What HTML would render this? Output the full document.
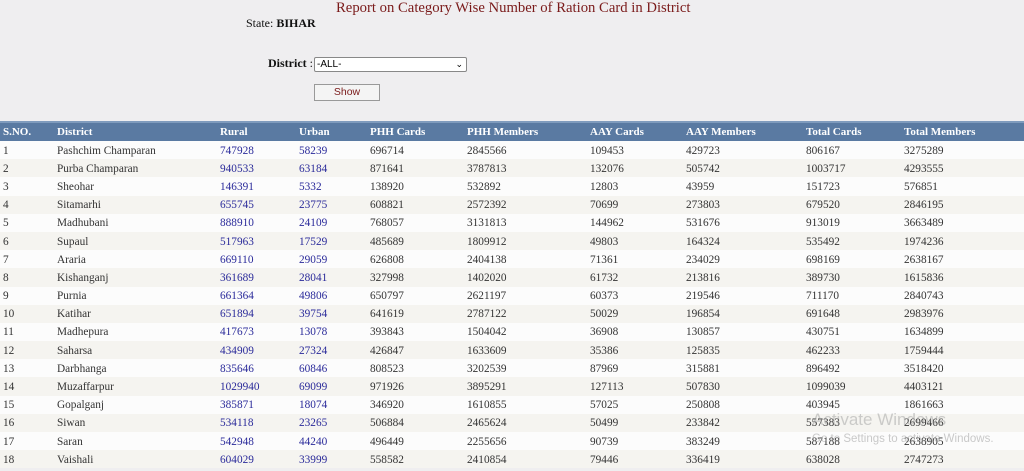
<!DOCTYPE html>
<html><head><meta charset="utf-8"><style>
body{margin:0;width:1024px;height:471px;background:#efeef0;font-family:"Liberation Serif",serif;overflow:hidden;position:relative}
.t{position:absolute;white-space:nowrap}
table{position:absolute;left:0;top:121px;width:1024px;border-collapse:collapse;font-size:11.3px;table-layout:fixed}
th{background:#5a7aa2;color:#fff;text-align:left;height:18px;padding:0 0 0 3px;font-weight:bold;border-top:2px solid #7f9bbd;font-size:11px}
td{height:18.2px;padding:1px 0 0 3px;color:#333;box-sizing:border-box}
tr:nth-child(odd) td{background:#f5f4f0}
tr:nth-child(even) td{background:#fcfcfc}
td.l{color:#2a2a9a}
</style></head><body>
<div class="t" style="left:336px;top:0;font-size:14.7px;color:#7a1a1a">Report on Category Wise Number of Ration Card in District</div>
<div class="t" style="left:246px;top:16px;font-size:12px;color:#111">State: <b>BIHAR</b></div>
<div class="t" style="left:268px;top:56px;font-size:12px;color:#111"><b>District</b> :</div>
<div class="t" style="left:314px;top:57px;width:149px;height:13px;border:1px solid #888;background:#fff;border-radius:2px;font-family:'Liberation Sans',sans-serif;font-size:10px;line-height:13px;padding-left:2px;box-sizing:content-box">-ALL-<span style="position:absolute;right:3px;top:0;font-size:9px">&#8964;</span></div>
<div class="t" style="left:314px;top:84px;width:64px;height:15px;border:1px solid #999;background:#f4f4f4;font-family:'Liberation Sans',sans-serif;font-size:10.5px;line-height:15px;text-align:center;color:#7a1a1a">Show</div>
<table>
<colgroup><col style="width:54px"><col style="width:163px"><col style="width:79px"><col style="width:71px"><col style="width:97px"><col style="width:123px"><col style="width:96px"><col style="width:120px"><col style="width:98px"><col></colgroup>
<tr><th>S.NO.</th><th>District</th><th>Rural</th><th>Urban</th><th>PHH Cards</th><th>PHH Members</th><th>AAY Cards</th><th>AAY Members</th><th>Total Cards</th><th>Total Members</th></tr>
<tr><td>1</td><td>Pashchim Champaran</td><td class="l">747928</td><td class="l">58239</td><td>696714</td><td>2845566</td><td>109453</td><td>429723</td><td>806167</td><td>3275289</td></tr>
<tr><td>2</td><td>Purba Champaran</td><td class="l">940533</td><td class="l">63184</td><td>871641</td><td>3787813</td><td>132076</td><td>505742</td><td>1003717</td><td>4293555</td></tr>
<tr><td>3</td><td>Sheohar</td><td class="l">146391</td><td class="l">5332</td><td>138920</td><td>532892</td><td>12803</td><td>43959</td><td>151723</td><td>576851</td></tr>
<tr><td>4</td><td>Sitamarhi</td><td class="l">655745</td><td class="l">23775</td><td>608821</td><td>2572392</td><td>70699</td><td>273803</td><td>679520</td><td>2846195</td></tr>
<tr><td>5</td><td>Madhubani</td><td class="l">888910</td><td class="l">24109</td><td>768057</td><td>3131813</td><td>144962</td><td>531676</td><td>913019</td><td>3663489</td></tr>
<tr><td>6</td><td>Supaul</td><td class="l">517963</td><td class="l">17529</td><td>485689</td><td>1809912</td><td>49803</td><td>164324</td><td>535492</td><td>1974236</td></tr>
<tr><td>7</td><td>Araria</td><td class="l">669110</td><td class="l">29059</td><td>626808</td><td>2404138</td><td>71361</td><td>234029</td><td>698169</td><td>2638167</td></tr>
<tr><td>8</td><td>Kishanganj</td><td class="l">361689</td><td class="l">28041</td><td>327998</td><td>1402020</td><td>61732</td><td>213816</td><td>389730</td><td>1615836</td></tr>
<tr><td>9</td><td>Purnia</td><td class="l">661364</td><td class="l">49806</td><td>650797</td><td>2621197</td><td>60373</td><td>219546</td><td>711170</td><td>2840743</td></tr>
<tr><td>10</td><td>Katihar</td><td class="l">651894</td><td class="l">39754</td><td>641619</td><td>2787122</td><td>50029</td><td>196854</td><td>691648</td><td>2983976</td></tr>
<tr><td>11</td><td>Madhepura</td><td class="l">417673</td><td class="l">13078</td><td>393843</td><td>1504042</td><td>36908</td><td>130857</td><td>430751</td><td>1634899</td></tr>
<tr><td>12</td><td>Saharsa</td><td class="l">434909</td><td class="l">27324</td><td>426847</td><td>1633609</td><td>35386</td><td>125835</td><td>462233</td><td>1759444</td></tr>
<tr><td>13</td><td>Darbhanga</td><td class="l">835646</td><td class="l">60846</td><td>808523</td><td>3202539</td><td>87969</td><td>315881</td><td>896492</td><td>3518420</td></tr>
<tr><td>14</td><td>Muzaffarpur</td><td class="l">1029940</td><td class="l">69099</td><td>971926</td><td>3895291</td><td>127113</td><td>507830</td><td>1099039</td><td>4403121</td></tr>
<tr><td>15</td><td>Gopalganj</td><td class="l">385871</td><td class="l">18074</td><td>346920</td><td>1610855</td><td>57025</td><td>250808</td><td>403945</td><td>1861663</td></tr>
<tr><td>16</td><td>Siwan</td><td class="l">534118</td><td class="l">23265</td><td>506884</td><td>2465624</td><td>50499</td><td>233842</td><td>557383</td><td>2699466</td></tr>
<tr><td>17</td><td>Saran</td><td class="l">542948</td><td class="l">44240</td><td>496449</td><td>2255656</td><td>90739</td><td>383249</td><td>587188</td><td>2638905</td></tr>
<tr><td>18</td><td>Vaishali</td><td class="l">604029</td><td class="l">33999</td><td>558582</td><td>2410854</td><td>79446</td><td>336419</td><td>638028</td><td>2747273</td></tr>
</table>
<div class="t" style="left:812px;top:410px;font-family:'Liberation Sans',sans-serif;font-size:17px;color:rgba(150,150,150,.45)">Activate Windows</div>
<div class="t" style="left:812px;top:433px;font-family:'Liberation Sans',sans-serif;font-size:11.5px;color:rgba(150,150,150,.5)">Go to Settings to activate Windows.</div>
</body></html>
